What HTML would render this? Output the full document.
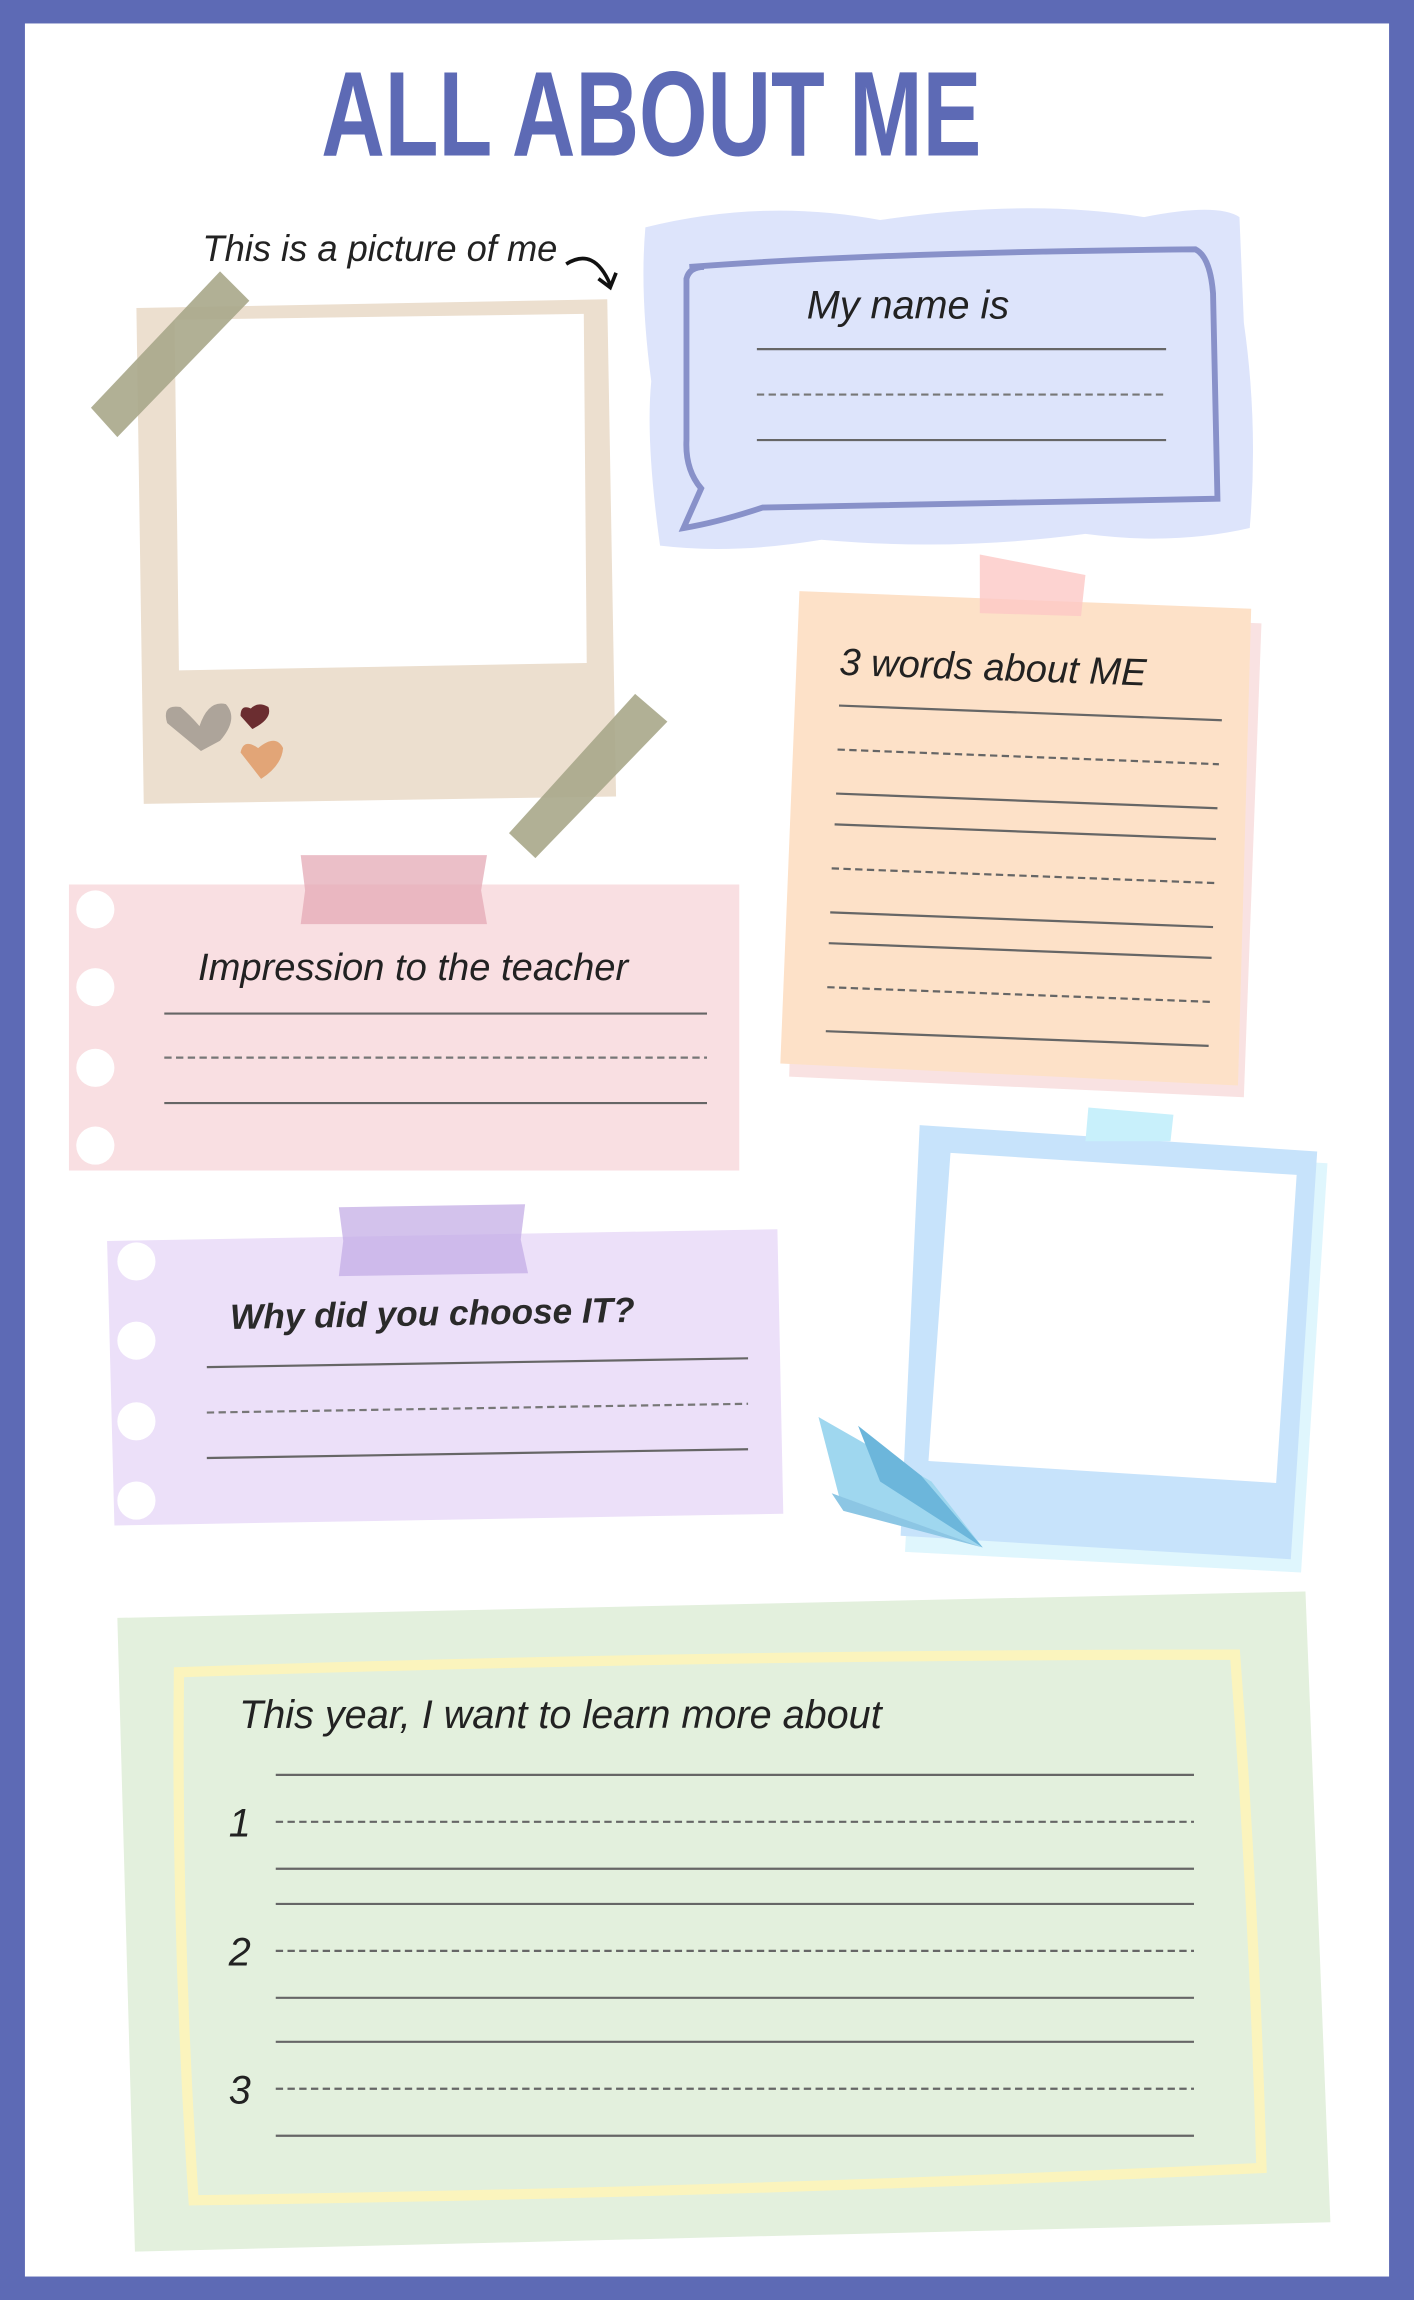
<!DOCTYPE html>
<html><head><meta charset="utf-8"><style>
html,body{margin:0;padding:0;background:#fff}
svg{display:block}
.h{font-family:"Liberation Sans",sans-serif;font-style:italic;fill:#222}
</style></head><body>
<svg width="1414" height="2300" viewBox="0 0 964 1568" preserveAspectRatio="none" xmlns="http://www.w3.org/2000/svg">
<rect x="0" y="0" width="964" height="1568" fill="#5d6ab5"/>
<rect x="17" y="16" width="930" height="1536" fill="#fff"/>
<text x="444" y="106" text-anchor="middle" font-family="Liberation Sans,sans-serif" font-weight="bold" font-size="82" fill="#5d6ab5" textLength="450" lengthAdjust="spacingAndGlyphs">ALL ABOUT ME</text>

<!-- picture frame -->
<text x="138" y="178" class="h" font-size="25" textLength="242" lengthAdjust="spacingAndGlyphs">This is a picture of me</text>
<path d="M386 180 Q405 168 416 194" stroke="#111" stroke-width="2.5" fill="none"/><path d="M408 190 L416 196 L420 186" stroke="#111" stroke-width="2.5" fill="none"/>
<polygon points="93,210 414,204 420,543 98,548" fill="#ecdfcf"/>
<polygon points="119,218 398,214 400,452 122,457" fill="#fff"/>
<polygon points="62,278 150,185 170,205 80,298" fill="#a9a78a" opacity=".9"/>
<polygon points="347,568 433,473 455,492 365,585" fill="#a9a78a" opacity=".9"/>
<path d="M137 512 L114 493 Q110 480 123 482 Q130 488 136 495 Q142 477 154 480 Q163 490 150 505 Z" fill="#ada49a"/>
<path d="M172 497 L164 488 Q164 480 171 483 Q176 478 183 482 Q186 490 172 497Z" fill="#6b2d30"/>
<path d="M178 531 L164 513 Q166 503 176 510 Q188 500 193 510 Q192 522 178 531Z" fill="#e2a577"/>

<!-- name box -->
<path d="M440 155 Q520 135 600 150 Q700 135 780 148 Q830 138 845 148 L848 220 Q858 290 852 360 Q800 372 740 364 Q650 376 560 368 Q500 378 450 372 Q440 300 444 260 Q436 200 440 155Z" fill="#dde4fb"/>
<path d="M470 182 Q600 172 815 170 Q825 175 827 200 L830 340 Q700 342 520 346 Q490 356 466 360 L478 333 Q467 320 468 300 L468 190 Q470 182 480 182" fill="none" stroke="#8891c9" stroke-width="4"/>
<text x="550" y="217" class="h" font-size="27">My name is</text>
<line x1="516" y1="238" x2="795" y2="238" stroke="#666" stroke-width="1.5"/>
<line x1="516" y1="269" x2="795" y2="269" stroke="#777" stroke-width="1.5" stroke-dasharray="5,3"/>
<line x1="516" y1="300" x2="795" y2="300" stroke="#666" stroke-width="1.5"/>

<!-- 3 words -->
<polygon points="548,412 860,425 848,748 538,734" fill="#f9e2e2"/>
<polygon points="545,403 853,415 844,740 532,725" fill="#fde1c8"/>
<polygon points="668,378 740,392 737,420 668,418" fill="#fcc8c6" opacity=".8"/>
<text x="572" y="460" class="h" font-size="26" transform="rotate(2 572 460)">3 words about ME</text>
<g stroke="#666" stroke-width="1.5">
<line x1="572" y1="481" x2="833" y2="491"/>
<line x1="571" y1="511" x2="831" y2="521" stroke-dasharray="5,3"/>
<line x1="570" y1="541" x2="830" y2="551"/>
<line x1="569" y1="562" x2="829" y2="572"/>
<line x1="567" y1="592" x2="828" y2="602" stroke-dasharray="5,3"/>
<line x1="566" y1="622" x2="827" y2="632"/>
<line x1="565" y1="643" x2="826" y2="653"/>
<line x1="564" y1="673" x2="825" y2="683" stroke-dasharray="5,3"/>
<line x1="563" y1="703" x2="824" y2="713"/>
</g>

<!-- impression -->
<rect x="47" y="603" width="457" height="195" fill="#f9dfe2"/>
<g fill="#fff"><circle cx="65" cy="620" r="13"/><circle cx="65" cy="673" r="13"/><circle cx="65" cy="728" r="13"/><circle cx="65" cy="781" r="13"/></g>
<polygon points="205,583 332,583 328,607 332,630 205,630 208,607" fill="#e4aab5" opacity=".75"/>
<text x="135" y="668" class="h" font-size="26">Impression to the teacher</text>
<line x1="112" y1="691" x2="482" y2="691" stroke="#666" stroke-width="1.5"/>
<line x1="112" y1="721" x2="482" y2="721" stroke="#777" stroke-width="1.5" stroke-dasharray="5,3"/>
<line x1="112" y1="752" x2="482" y2="752" stroke="#666" stroke-width="1.5"/>

<!-- why -->
<polygon points="73,846 530,838 534,1032 78,1040" fill="#ece0f9"/>
<g fill="#fff"><circle cx="93" cy="860" r="13"/><circle cx="93" cy="914" r="13"/><circle cx="93" cy="969" r="13"/><circle cx="93" cy="1023" r="13"/></g>
<polygon points="231,823 358,821 355,845 360,868 231,870 234,846" fill="#c4aee6" opacity=".75"/>
<text x="157" y="906" font-family="Liberation Sans,sans-serif" font-weight="bold" font-style="italic" font-size="24" fill="#2a2a2a" transform="rotate(-1 157 906)">Why did you choose IT?</text>
<line x1="141" y1="932" x2="510" y2="926" stroke="#666" stroke-width="1.5"/>
<line x1="141" y1="963" x2="510" y2="957" stroke="#777" stroke-width="1.5" stroke-dasharray="5,3"/>
<line x1="141" y1="994" x2="510" y2="988" stroke="#666" stroke-width="1.5"/>

<!-- blue frame -->
<polygon points="632,778 905,793 887,1072 617,1058" fill="#dff6fd"/>
<polygon points="627,767 898,785 880,1063 614,1047" fill="#c7e3fb"/>
<polygon points="648,786 884,801 870,1011 633,996" fill="#fff"/>
<polygon points="742,755 800,760 798,778 740,778" fill="#c8f0fb"/>
<polygon points="558,966 635,1010 670,1055 572,1020" fill="#9fd7ef"/>
<polygon points="585,972 628,1006 670,1055 600,1010" fill="#6cb6db"/>
<polygon points="567,1018 670,1055 575,1030" fill="#8cc6e4"/>

<!-- bottom -->
<polygon points="80,1103 890,1085 907,1515 92,1535" fill="#e3f0dd"/>
<path d="M122 1140 Q480 1128 842 1128 Q855 1300 860 1478 Q500 1495 132 1500 Q120 1320 122 1140Z" fill="none" stroke="#fbf4bd" stroke-width="7"/>
<text x="163" y="1178" class="h" font-size="27">This year, I want to learn more about</text>
<text x="156" y="1252" class="h" font-size="27">1</text>
<text x="156" y="1340" class="h" font-size="27">2</text>
<text x="156" y="1434" class="h" font-size="27">3</text>
<g stroke="#666" stroke-width="1.5">
<line x1="188" y1="1210" x2="814" y2="1210"/>
<line x1="188" y1="1242" x2="814" y2="1242" stroke-dasharray="5,3"/>
<line x1="188" y1="1274" x2="814" y2="1274"/>
<line x1="188" y1="1298" x2="814" y2="1298"/>
<line x1="188" y1="1330" x2="814" y2="1330" stroke-dasharray="5,3"/>
<line x1="188" y1="1362" x2="814" y2="1362"/>
<line x1="188" y1="1392" x2="814" y2="1392"/>
<line x1="188" y1="1424" x2="814" y2="1424" stroke-dasharray="5,3"/>
<line x1="188" y1="1456" x2="814" y2="1456"/>
</g>
</svg>
</body></html>
